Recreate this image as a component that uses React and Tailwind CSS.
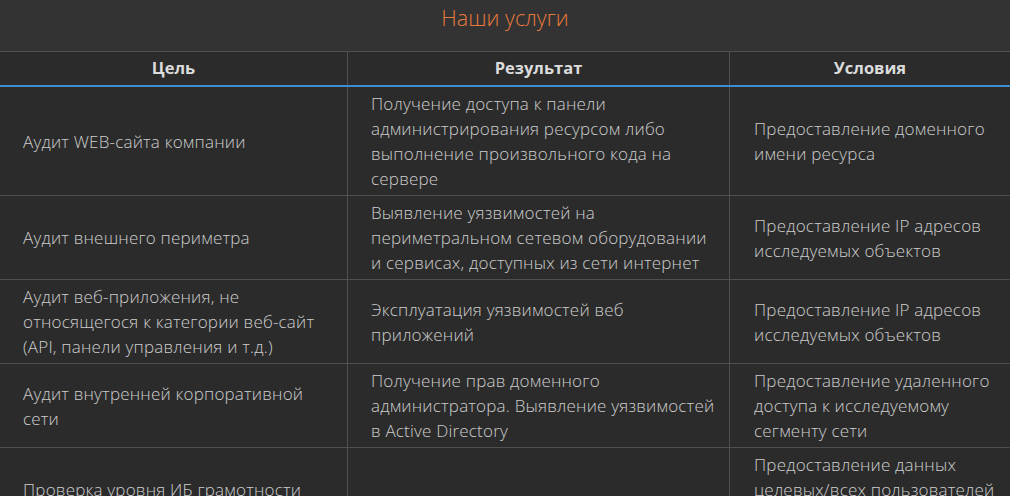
import React from "react";

// each cell is given as its wrapped lines so the breaks match the design
const rows = [
  {
    goal: ["Аудит WEB-сайта компании"],
    result: [
      "Получение доступа к панели",
      "администрирования ресурсом либо",
      "выполнение произвольного кода на",
      "сервере",
    ],
    terms: ["Предоставление доменного", "имени ресурса"],
  },
  {
    goal: ["Аудит внешнего периметра"],
    result: [
      "Выявление уязвимостей на",
      "периметральном сетевом оборудовании",
      "и сервисах, доступных из сети интернет",
    ],
    terms: ["Предоставление IP адресов", "исследуемых объектов"],
  },
  {
    goal: [
      "Аудит веб-приложения, не",
      "относящегося к категории веб-сайт",
      "(API, панели управления и т.д.)",
    ],
    result: ["Эксплуатация уязвимостей веб", "приложений"],
    terms: ["Предоставление IP адресов", "исследуемых объектов"],
  },
  {
    goal: ["Аудит внутренней корпоративной", "сети"],
    result: [
      "Получение прав доменного",
      "администратора. Выявление уязвимостей",
      "в Active Directory",
    ],
    terms: [
      "Предоставление удаленного",
      "доступа к исследуемому",
      "сегменту сети",
    ],
  },
  {
    goal: ["Проверка уровня ИБ грамотности", "сотрудников"],
    result: ["Фишинговая рассылка"],
    terms: [
      "Предоставление данных",
      "целевых/всех пользователей",
      "организации для",
      "проведения рассылки",
    ],
  },
];

function Cell({ lines, className }) {
  return (
    <div className={"flex flex-col justify-center py-[4px] " + className}>
      {lines.map((l, i) => (
        <span key={i} className="whitespace-nowrap">
          {l}
        </span>
      ))}
    </div>
  );
}

function App() {
  return (
    <div
      className="min-h-screen bg-[#333333] text-[#cdcdcd]"
      style={{ fontFamily: '"Open Sans", "Noto Sans", sans-serif' }}
    >
      <h2 className="h-[51px] pt-[2px] text-center text-[21.5px] font-light text-[#e8793c]">
        Наши услуги
      </h2>

      <div className="border-t border-[#505050]">
        {/* header */}
        <div className="grid grid-cols-[347px_382px_1fr] border-b-2 border-[#3d8fd1] bg-[#2b2b2b] text-[16.5px] font-bold text-[#dcdcdc]">
          <div className="flex h-[33px] items-center justify-center">Цель</div>
          <div className="flex h-[33px] items-center justify-center border-l border-[#505050]">
            Результат
          </div>
          <div className="flex h-[33px] items-center justify-center border-l border-[#505050]">
            Условия
          </div>
        </div>

        {rows.map((row, i) => (
          <div
            key={i}
            className="grid grid-cols-[347px_382px_1fr] border-b border-[#505050] bg-[#2b2b2b] text-[17px] font-light leading-[25px] tracking-[0.2px]"
          >
            <Cell lines={row.goal} className="pl-[23px]" />
            <Cell lines={row.result} className="border-l border-[#505050] pl-[23px]" />
            <Cell lines={row.terms} className="border-l border-[#505050] pl-[24px]" />
          </div>
        ))}
      </div>
    </div>
  );
}

export default App;
